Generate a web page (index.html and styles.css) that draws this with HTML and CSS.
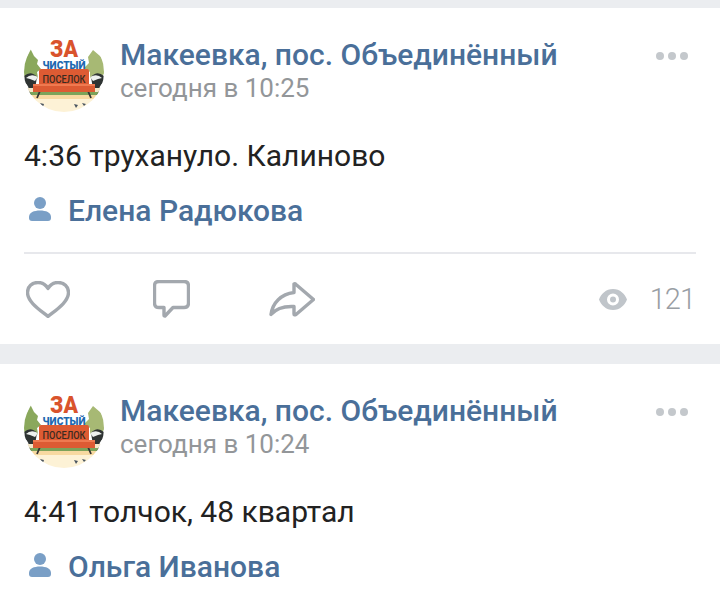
FILE: index.html
```html
<!DOCTYPE html>
<html lang="ru">
<head>
<meta charset="utf-8">
<title>Лента</title>
<link rel="stylesheet" href="styles.css">
</head>
<body>
<svg class="defs" width="0" height="0" aria-hidden="true">
  <defs>
    <clipPath id="round"><circle cx="40" cy="40" r="40"/></clipPath>
    <g id="scene">
      <circle cx="40" cy="40" r="40" fill="#fff"/>
      <g clip-path="url(#round)">
        <path d="M0 44 V28 L3 25 L6 16 L10 24 L14 28 L13 32 L17 37 L13 40 L14 46 L6 50Z" fill="#8aa85c"/>
        <path d="M80 42 V30 L76 24 L69 18 L64 25 L65 31 L60 36 L66 40 L66 46 L74 48Z" fill="#a7b974"/>
        <path d="M0 44 Q7 38 13 45 L11 57 L9 63 L4 63 Q7 54 0 50Z" fill="#2f3433"/>
        <path d="M80 44 Q73 38 67 45 L69 57 L71 63 L76 63 Q73 54 80 50Z" fill="#2f3433"/>
        <path d="M2 46 Q7 41 14 45 L11 49 L6 47Z" fill="#eef1ef"/>
        <path d="M78 46 Q73 41 66 45 L69 49 L74 47Z" fill="#eef1ef"/>
        <rect x="0" y="56" width="80" height="4" fill="#f4e7c9"/>
        <rect x="0" y="60" width="80" height="3" fill="#7ca35a"/>
        <rect x="0" y="63" width="80" height="4" fill="#f7d9a1"/>
        <rect x="0" y="67" width="80" height="13" fill="#fdf2d6"/>
        <path d="M16 59 L13 66 M64 59 L67 66" stroke="#333" stroke-width="1.800" fill="none"/>
        <path d="M15 39 Q15 37 17 37 H63 Q65 37 65 39 V52 H70 Q71 52 71 54 V60 H9 V54 Q9 52 10 52 H15Z" fill="#dd5b33"/>
        <rect x="9" y="52" width="62" height="2" fill="#ef7a50"/>
        <path d="M16 71 l4 1 l-1 3z M50 72 l4 1 l-2 3z M58 71 l4 1 l-2 2z" fill="#4a5560"/>
      </g>
    </g>
  </defs>
  <symbol id="person" viewBox="0 0 22 24">
    <circle cx="11" cy="6" r="6"/>
    <path d="M0 20 C0 15.500 5 13.500 11 13.500 S22 15.500 22 20 V21 Q22 24 19 24 H3 Q0 24 0 21Z"/>
  </symbol>
</svg>

<main class="feed">
  <article class="post post-full">
    <header class="post-head">
      <svg class="avatar" viewBox="0 0 80 80">
        <use href="#scene"/>
        <text x="40" y="25" class="av-za" textLength="28" lengthAdjust="spacingAndGlyphs">ЗА</text>
        <text x="40" y="37" class="av-top" textLength="43" lengthAdjust="spacingAndGlyphs">ЧИСТЫЙ</text>
        <text x="40" y="51" class="av-bottom" textLength="43" lengthAdjust="spacingAndGlyphs">ПОСЕЛОК</text>
      </svg>
      <div class="post-meta">
        <div class="post-name">Макеевка, пос. Объединённый</div>
        <div class="post-date">сегодня в 10:25</div>
      </div>
      <div class="more"><i></i><i></i><i></i></div>
    </header>
    <p class="post-text">4:36 трухануло. Калиново</p>
    <div class="author">
      <svg class="author-icon"><use href="#person"/></svg>
      <span>Елена Радюкова</span>
    </div>
    <footer class="actions">
      <svg class="act act-like" viewBox="0 0 44 37"><path d="M22 35.500 C14 29 1.500 21 1.500 11.500 C1.500 5.500 6 1.500 12 1.500 C16.500 1.500 20 4 22 7.500 C24 4 27.500 1.500 32 1.500 C38 1.500 42.500 5.500 42.500 11.500 C42.500 21 30 29 22 35.500Z"/></svg>
      <svg class="act act-comment" viewBox="0 0 37 38"><path d="M6 1.500 H31 Q35.500 1.500 35.500 6 V23 Q35.500 27.500 31 27.500 H20 L12 36 Q11 36 11 35 V27.500 H6 Q1.500 27.500 1.500 23 V6 Q1.500 1.500 6 1.500Z"/></svg>
      <svg class="act act-share" viewBox="0 0 46 35"><path d="M25 2 Q26 1.500 27 2.500 L44.500 17.500 L27 32.500 Q25 33.500 25 32 V24.500 C15 24 7 26.500 2 32.500 C3.500 21 12 12 25 10.500Z"/></svg>
      <div class="views">
        <svg class="eye" viewBox="0 0 28 21"><path fill-rule="evenodd" d="M14 0 C21 0 26 5 28 10.500 C26 16 21 21 14 21 C7 21 2 16 0 10.500 C2 5 7 0 14 0Z M14 4.500 A6 6 0 1 0 14 16.500 A6 6 0 1 0 14 4.500Z M14 7.500 A3 3 0 1 1 14 13.500 A3 3 0 1 1 14 7.500Z"/></svg>
        <span>121</span>
      </div>
    </footer>
  </article>

  <article class="post post-clipped">
    <header class="post-head">
      <svg class="avatar" viewBox="0 0 80 80">
        <use href="#scene"/>
        <text x="40" y="25" class="av-za" textLength="28" lengthAdjust="spacingAndGlyphs">ЗА</text>
        <text x="40" y="37" class="av-top" textLength="43" lengthAdjust="spacingAndGlyphs">ЧИСТЫЙ</text>
        <text x="40" y="51" class="av-bottom" textLength="43" lengthAdjust="spacingAndGlyphs">ПОСЕЛОК</text>
      </svg>
      <div class="post-meta">
        <div class="post-name">Макеевка, пос. Объединённый</div>
        <div class="post-date">сегодня в 10:24</div>
      </div>
      <div class="more"><i></i><i></i><i></i></div>
    </header>
    <p class="post-text">4:41 толчок, 48 квартал</p>
    <div class="author">
      <svg class="author-icon"><use href="#person"/></svg>
      <span>Ольга Иванова</span>
    </div>
  </article>
</main>
</body>
</html>
```
FILE: styles.css
```css
* { box-sizing: border-box; }
html, body { margin: 0; height: 601px; overflow: hidden; }
body { background: #ebedf0; font-family: Roboto, "Noto Sans", sans-serif; }
.defs { position: absolute; }
.feed { display: flex; flex-direction: column; gap: 20px; padding-top: 8px; }
.post { background: #fff; padding: 24px 24px 0; }
.post-full { height: 336px; }
.post-clipped { height: 237px; }
.post-head { display: flex; align-items: flex-start; }
.avatar { width: 80px; height: 80px; flex: none; }
.post-meta { flex: 1; margin: 6px 0 0 16px; }
.post-name { font-size: 30px; line-height: 34px; font-weight: 500; color: #4a6f99; }
.post-date { font-size: 26px; line-height: 30px; margin-top: 1px; color: #939699; }
.more { display: flex; gap: 4px; margin: 20px 8px 0 0; }
.more i { width: 8px; height: 8px; border-radius: 50%; background: #c4c8cc; }
.post-text { margin: 26px 0 0; font-size: 30px; line-height: 36px; color: #222; }
.author { display: flex; align-items: center; margin-top: 18px; height: 36px; font-size: 30px; font-weight: 500; color: #4a6f99; }
.author-icon { width: 22px; height: 24px; margin: 0 17px 2px 5px; fill: #7a9fc6; }
.actions { display: flex; align-items: center; margin-top: 24px; border-top: 2px solid #e7e8ec; height: 90px; padding-top: 2px; }
.act { fill: none; stroke: #a3a8ae; stroke-width: 3.400; stroke-linejoin: round; }
.act-like { width: 44px; height: 37px; margin-left: 2px; }
.act-comment { width: 37px; height: 38px; margin-left: 83px; }
.act-share { width: 46px; height: 35px; margin-left: 79px; }
.views { display: flex; align-items: center; margin: 0 1px 0 auto; font-size: 29px; font-weight: 300; letter-spacing: -1px; color: #999ea4; }
.eye { width: 28px; height: 21px; margin-right: 23px; fill: #c0c5ca; }
.av-za { font: 900 24px Roboto, sans-serif; fill: #d9532c; text-anchor: middle; }
.av-top { font: 900 11px Roboto, sans-serif; fill: #1d68b0; text-anchor: middle; }
.av-bottom { font: 500 11px Roboto, sans-serif; fill: #3a2a20; text-anchor: middle; }
```
